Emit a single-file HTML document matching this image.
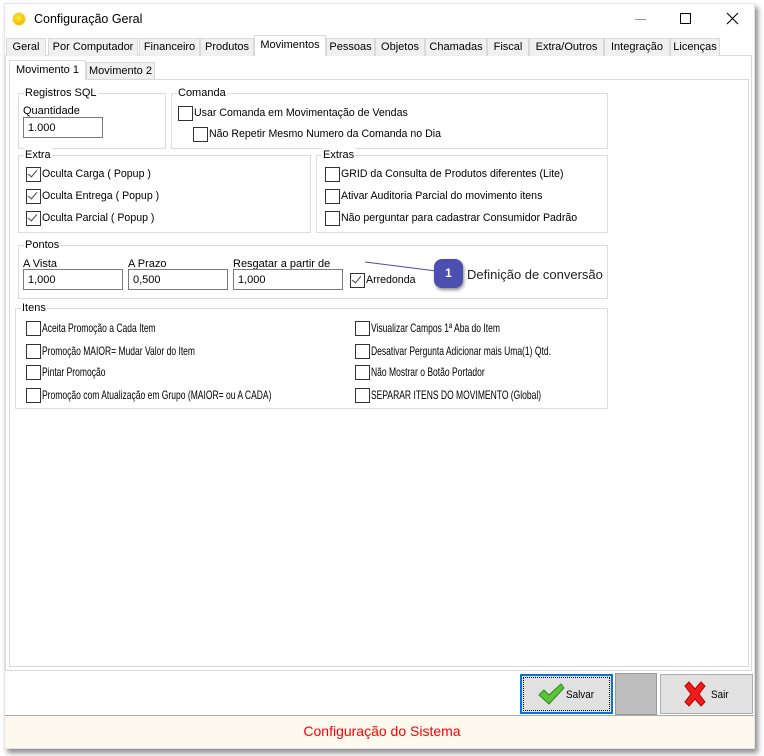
<!DOCTYPE html>
<html><head><meta charset="utf-8">
<style>
*{margin:0;padding:0;box-sizing:border-box}
body{width:764px;height:756px;background:#fff;font-family:"Liberation Sans",Tahoma,sans-serif;font-size:10.6px;color:#000;position:relative;overflow:hidden}
.a{position:absolute}
.win{left:4px;top:3px;width:751px;height:746px;background:#fff;border:1px solid #e4e4e4;box-shadow:3px 4px 5px rgba(0,0,0,.45)}
.tab{position:absolute;top:38px;height:18px;background:#f0f0f0;border:1px solid #d9d9d9;border-bottom:none;font-size:11px;line-height:16px;text-align:center;white-space:nowrap}
.g{position:absolute;border:1px solid #dcdcdc}
.lg{position:absolute;top:-8px;left:5px;background:#fff;padding:0 1px;line-height:14px;white-space:nowrap;font-size:11px}
.cb{position:absolute;white-space:nowrap;line-height:14px;padding-left:16px}
.cb:before{content:"";position:absolute;left:0;top:0;width:13px;height:13px;border:1px solid #333;background:#fff}
.cb.c:after{content:"";position:absolute;left:4px;top:1px;width:4px;height:8px;border:solid #444;border-width:0 1.3px 1.3px 0;transform:rotate(40deg)}
.cb.n span{display:inline-block;font-size:12px;transform:scaleX(.71);transform-origin:left;line-height:14px}
.inp{position:absolute;height:21px;border:1px solid #7a7a7a;background:#fff;padding:3px 0 0 4px;line-height:14px;font-size:11px}
.lbl{position:absolute;white-space:nowrap;line-height:14px;font-size:11px}
</style></head><body>
<div class="a win"></div>
<div class="a" style="left:13px;top:13px;width:12px;height:12px;border-radius:50%;background:radial-gradient(circle at 45% 40%,#ffe94a,#f5c400 60%,#f0a000);box-shadow:0 0 2px #f7b500"></div>
<div class="lbl" style="left:34px;top:12px;font-size:12.5px">Configuração Geral</div>
<div class="a" style="left:635px;top:19px;width:11px;height:1px;background:#999"></div>
<div class="a" style="left:680px;top:13px;width:11px;height:11px;border:1px solid #000"></div>
<svg class="a" style="left:726px;top:12px" width="13" height="13"><path d="M1 1L12 12M12 1L1 12" stroke="#000" stroke-width="1.1"/></svg>
<div class="a" style="left:5px;top:55px;width:747px;height:616px;border:1px solid #d9d9d9"></div>
<div class="tab" style="left:6px;width:40px">Geral</div>
<div class="tab" style="left:48px;width:90px">Por Computador</div>
<div class="tab" style="left:139px;width:61px">Financeiro</div>
<div class="tab" style="left:200px;width:54px">Produtos</div>
<div class="tab" style="left:254px;top:35px;height:21px;width:72px;background:#fff;line-height:18px;z-index:2">Movimentos</div>
<div class="tab" style="left:326px;width:49px">Pessoas</div>
<div class="tab" style="left:375px;width:50px">Objetos</div>
<div class="tab" style="left:425px;width:62px">Chamadas</div>
<div class="tab" style="left:487px;width:42px">Fiscal</div>
<div class="tab" style="left:529px;width:75px">Extra/Outros</div>
<div class="tab" style="left:604px;width:66px">Integração</div>
<div class="tab" style="left:670px;width:50px">Licenças</div>
<div class="a" style="left:9px;top:79px;width:740px;height:588px;border:1px solid #d9d9d9"></div>
<div class="tab" style="left:9px;top:60px;height:20px;width:77px;background:#fff;line-height:18px;z-index:2">Movimento 1</div>
<div class="tab" style="left:86px;top:62px;width:69px;height:17px">Movimento 2</div>

<div class="g" style="left:18px;top:93px;width:148px;height:56px"><span class="lg">Registros SQL</span></div>
<div class="lbl" style="left:23px;top:104px">Quantidade</div>
<div class="inp" style="left:23px;top:117px;width:80px">1.000</div>

<div class="g" style="left:171px;top:93px;width:437px;height:56px"><span class="lg" style="left:5px">Comanda</span></div>
<div class="cb" style="left:178px;top:106px">Usar Comanda em Movimentação de Vendas</div>
<div class="cb" style="left:193px;top:127px">Não Repetir Mesmo Numero da Comanda no Dia</div>

<div class="g" style="left:18px;top:155px;width:293px;height:78px"><span class="lg">Extra</span></div>
<div class="cb c" style="left:26px;top:167px">Oculta Carga ( Popup )</div>
<div class="cb c" style="left:26px;top:189px">Oculta Entrega ( Popup )</div>
<div class="cb c" style="left:26px;top:211px">Oculta Parcial ( Popup )</div>

<div class="g" style="left:316px;top:155px;width:292px;height:78px"><span class="lg">Extras</span></div>
<div class="cb" style="left:325px;top:167px">GRID da Consulta de Produtos diferentes (Lite)</div>
<div class="cb" style="left:325px;top:189px">Ativar Auditoria Parcial do movimento itens</div>
<div class="cb" style="left:325px;top:211px">Não perguntar para cadastrar Consumidor Padrão</div>

<div class="g" style="left:18px;top:245px;width:590px;height:54px"><span class="lg">Pontos</span></div>
<div class="lbl" style="left:23px;top:257px">A Vista</div>
<div class="inp" style="left:23px;top:269px;width:100px">1,000</div>
<div class="lbl" style="left:128px;top:257px">A Prazo</div>
<div class="inp" style="left:128px;top:269px;width:100px">0,500</div>
<div class="lbl" style="left:233px;top:257px">Resgatar a partir de</div>
<div class="inp" style="left:233px;top:269px;width:110px">1,000</div>
<div class="cb c" style="left:350px;top:273px">Arredonda</div>
<svg class="a" style="left:360px;top:255px" width="80" height="20"><line x1="5" y1="7" x2="76" y2="16" stroke="#4a4aa8" stroke-width="1"/></svg>
<div class="a" style="left:434px;top:259px;width:29px;height:29px;border-radius:8px;background:#4b4fb0;box-shadow:1px 2px 3px rgba(0,0,0,.45);color:#fff;font-weight:bold;font-size:12px;text-align:center;line-height:29px">1</div>
<div class="lbl" style="left:467px;top:268px;font-size:13px;color:#222">Definição de conversão</div>

<div class="g" style="left:15px;top:308px;width:593px;height:101px"><span class="lg">Itens</span></div>
<div class="cb n" style="left:26px;top:321px"><span>Aceita Promoção a Cada Item</span></div>
<div class="cb n" style="left:26px;top:344px"><span>Promoção MAIOR= Mudar Valor do Item</span></div>
<div class="cb n" style="left:26px;top:365px"><span>Pintar Promoção</span></div>
<div class="cb n" style="left:26px;top:388px"><span>Promoção com Atualização em Grupo (MAIOR= ou A CADA)</span></div>
<div class="cb n" style="left:355px;top:321px"><span>Visualizar Campos 1ª Aba do Item</span></div>
<div class="cb n" style="left:355px;top:344px"><span>Desativar Pergunta Adicionar mais Uma(1) Qtd.</span></div>
<div class="cb n" style="left:355px;top:365px"><span>Não Mostrar o Botão Portador</span></div>
<div class="cb n" style="left:355px;top:388px"><span>SEPARAR ITENS DO MOVIMENTO (Global)</span></div>

<div class="a" style="left:520px;top:674px;width:93px;height:40px;background:#e1e1e1;border:2px solid #0a6fd6"><div style="position:absolute;inset:1px;border:1px dotted #000"></div></div>
<svg class="a" style="left:537px;top:682px" width="28" height="24"><path d="M2 13L7 8L12 13L24 2L27 6L12 22Z" fill="#5cc23a" stroke="#2f8a1d" stroke-width="1"/></svg>
<div class="lbl" style="left:566px;top:688px;font-size:11px;transform:scaleX(.9);transform-origin:left">Salvar</div>
<div class="a" style="left:615px;top:673px;width:42px;height:42px;background:#bdbdbd;border:1px solid #999"></div>
<div class="a" style="left:660px;top:674px;width:93px;height:40px;background:#e1e1e1;border:1px solid #adadad"></div>
<svg class="a" style="left:683px;top:681px" width="24" height="26"><path d="M2 5L6 1L12 8L18 1L22 5L16 13L22 21L18 25L12 18L6 25L2 21L8 13Z" fill="#ee1c1c" stroke="#b00" stroke-width="1"/></svg>
<div class="lbl" style="left:711px;top:688px;font-size:11px;transform:scaleX(.9);transform-origin:left">Sair</div>

<div class="a" style="left:5px;top:715px;width:749px;height:33px;background:#fdf9ef;border-top:1px solid #aaa"></div>
<div class="lbl" style="left:0;width:764px;top:724px;text-align:center;color:#f00;font-size:14px">Configuração do Sistema</div>
</body></html>
